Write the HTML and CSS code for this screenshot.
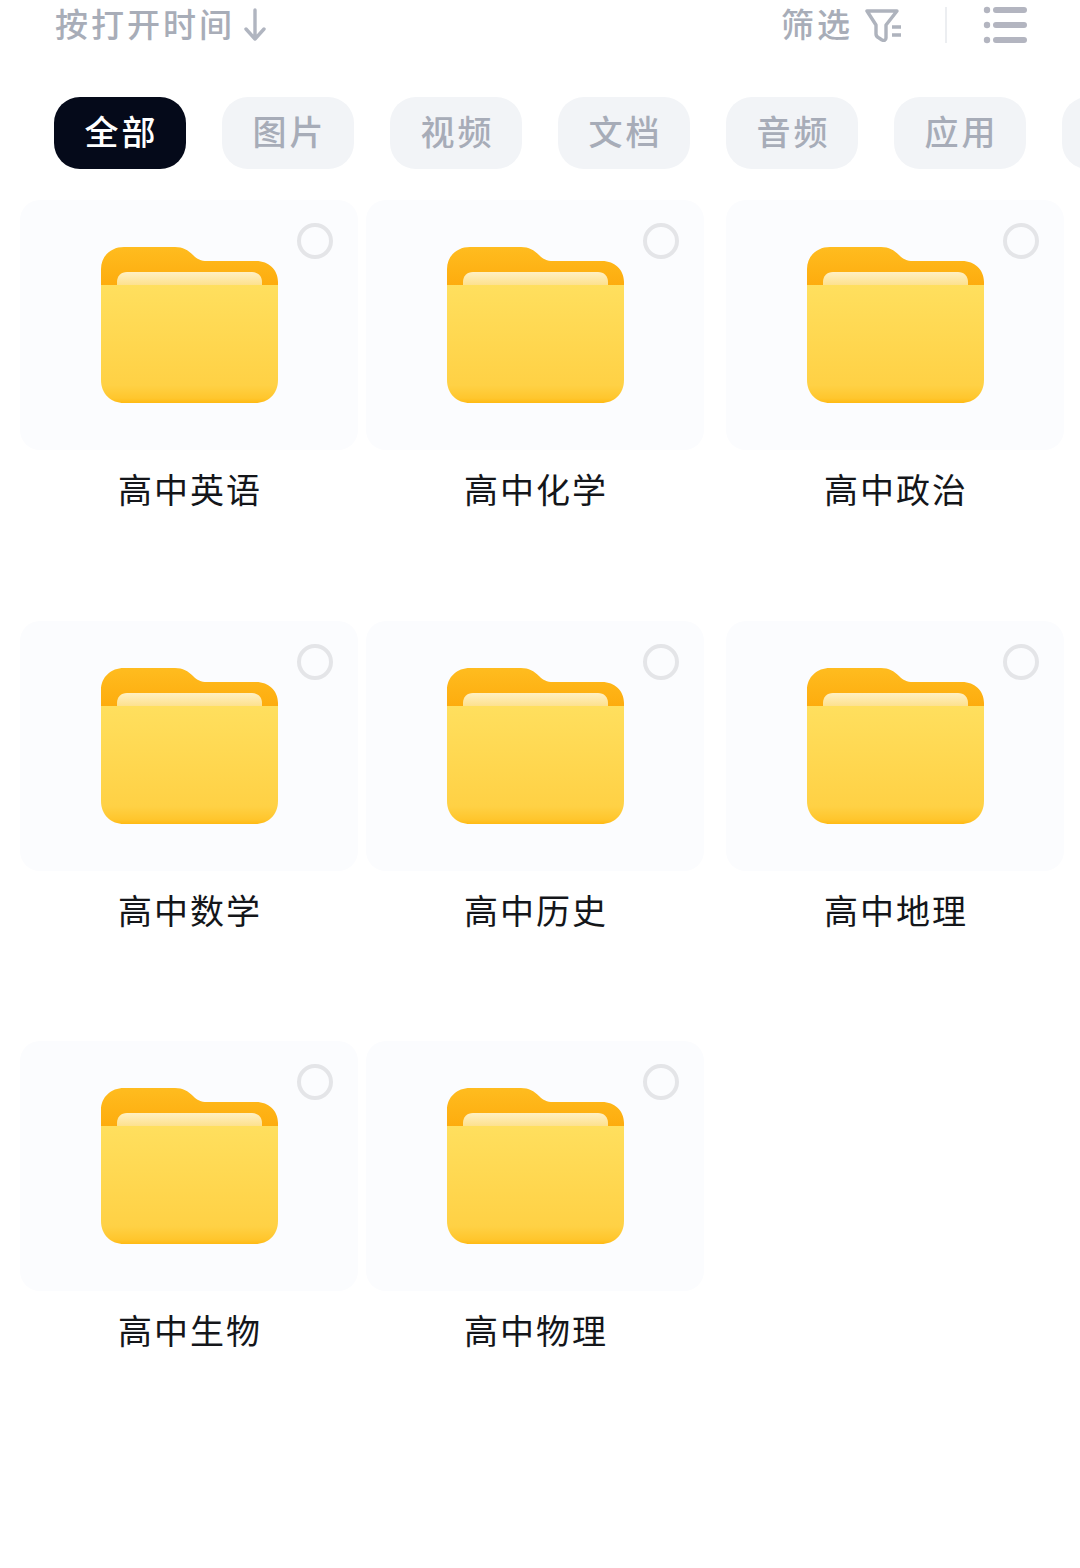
FILE: index.html
```html
<!DOCTYPE html>
<html lang="zh-CN">
<head>
    <meta charset="UTF-8">
    <title>文件</title>
    <link rel="stylesheet" href="styles.css">
</head>
<body>
    <svg class="defs" aria-hidden="true">
        <defs>
            <linearGradient id="back-fill" x1="0" y1="0" x2="0" y2="1">
                <stop offset="0" stop-color="#ffbc1f"/>
                <stop offset="1" stop-color="#fdaa0c"/>
            </linearGradient>
            <linearGradient id="paper-fill" x1="0" y1="0" x2="0" y2="1">
                <stop offset="0" stop-color="#fff0c4"/>
                <stop offset="1" stop-color="#fde08a"/>
            </linearGradient>
            <linearGradient id="front-fill" x1="0" y1="0" x2="0" y2="1">
                <stop offset="0" stop-color="#ffdf5e"/>
                <stop offset="0.85" stop-color="#ffd145"/>
                <stop offset="0.96" stop-color="#ffc62d"/>
                <stop offset="1" stop-color="#ffba14"/>
            </linearGradient>
            <symbol id="folder" viewBox="0 0 177 158">
                <path d="M0 44V23C0 10 10 1 23 1H74C82 1 87 4 92 9C96 13 100 15 106 15H155C168 15 177 24 177 36V44Z" fill="url(#back-fill)"/>
                <path d="M16 40V36C16 30 20 26 26 26H151C157 26 161 30 161 36V40Z" fill="url(#paper-fill)"/>
                <path d="M0 39H177V134C177 148 167 157 154 157H23C10 157 0 148 0 134Z" fill="url(#front-fill)"/>
            </symbol>
        </defs>
    </svg>

    <div class="top-bar">
        <div class="sort">
            <span class="label">按打开时间</span>
            <svg class="arrow" width="22" height="34" viewBox="0 0 22 34">
                <path d="M11 2V31M2 21L11 31L20 21" fill="none" stroke="#b0b5c0" stroke-width="3.4" stroke-linecap="round" stroke-linejoin="round"/>
            </svg>
        </div>
        <div class="tools">
            <span class="label">筛选</span>
            <svg class="filter" width="38" height="34" viewBox="0 0 38 34">
                <path d="M3 3H33L22 17V30C22 32 20 33 18 32L15 30C13 29 12 28 12 26V17Z" fill="none" stroke="#aeb3bd" stroke-width="3.4" stroke-linejoin="round"/>
                <path d="M28 19H37M28 27H37" stroke="#aeb3bd" stroke-width="3.4"/>
            </svg>
            <div class="divider"></div>
            <svg class="list" width="44" height="44" viewBox="0 0 44 44">
                <circle cx="4" cy="7" r="3.2" fill="#b3b5c0"/>
                <circle cx="4" cy="22" r="3.2" fill="#b3b5c0"/>
                <circle cx="4" cy="37" r="3.2" fill="#b3b5c0"/>
                <path d="M13 7H41M13 22H41M13 37H41" stroke="#b3b5c0" stroke-width="6" stroke-linecap="round"/>
            </svg>
        </div>
    </div>

    <div class="tabs">
        <div class="tab active">全部</div>
        <div class="tab">图片</div>
        <div class="tab">视频</div>
        <div class="tab">文档</div>
        <div class="tab">音频</div>
        <div class="tab">应用</div>
        <div class="tab"></div>
    </div>

    <div class="grid">
        <div class="item">
            <div class="card"><span class="radio"></span><svg class="folder"><use href="#folder"/></svg></div>
            <div class="name">高中英语</div>
        </div>
        <div class="item">
            <div class="card"><span class="radio"></span><svg class="folder"><use href="#folder"/></svg></div>
            <div class="name">高中化学</div>
        </div>
        <div class="item">
            <div class="card"><span class="radio"></span><svg class="folder"><use href="#folder"/></svg></div>
            <div class="name">高中政治</div>
        </div>
        <div class="item">
            <div class="card"><span class="radio"></span><svg class="folder"><use href="#folder"/></svg></div>
            <div class="name">高中数学</div>
        </div>
        <div class="item">
            <div class="card"><span class="radio"></span><svg class="folder"><use href="#folder"/></svg></div>
            <div class="name">高中历史</div>
        </div>
        <div class="item">
            <div class="card"><span class="radio"></span><svg class="folder"><use href="#folder"/></svg></div>
            <div class="name">高中地理</div>
        </div>
        <div class="item">
            <div class="card"><span class="radio"></span><svg class="folder"><use href="#folder"/></svg></div>
            <div class="name">高中生物</div>
        </div>
        <div class="item">
            <div class="card"><span class="radio"></span><svg class="folder"><use href="#folder"/></svg></div>
            <div class="name">高中物理</div>
        </div>
    </div>
</body>
</html>
```

FILE: styles.css
```css
body {
    margin: 0;
    height: 1568px;
    overflow: hidden;
    background: #fff;
    font-family: "Noto Sans CJK SC", "Noto Sans", sans-serif;
}
.defs {
    display: block;
    width: 0;
    height: 0;
}
.top-bar {
    display: flex;
    justify-content: space-between;
    align-items: center;
    height: 50px;
    padding: 0 53px 0 55px;
    color: #a8adb8;
    font-size: 33px;
    font-weight: 500;
    letter-spacing: 3px;
}
.sort, .tools {
    display: flex;
    align-items: center;
}
.label {
    padding-bottom: 5px;
}
.arrow {
    margin-left: 9px;
}
.filter {
    margin-left: 11px;
}
.divider {
    width: 2px;
    height: 36px;
    margin: 0 36px 0 43px;
    background: #eceef1;
}
.tabs {
    display: flex;
    gap: 36px;
    margin-top: 47px;
    padding-left: 54px;
    overflow: hidden;
}
.tab {
    flex: none;
    width: 132px;
    height: 72px;
    border-radius: 26px;
    background: #f2f4f7;
    color: #a7acb8;
    font-size: 34px;
    font-weight: 500;
    letter-spacing: 3px;
    line-height: 68px;
    text-align: center;
    text-indent: 3px;
}
.tab.active {
    background: #050a1a;
    color: #fff;
}
.grid {
    display: grid;
    grid-template-columns: 346px 360px 336px;
    grid-auto-rows: 420.5px;
    margin-top: 31px;
    padding-left: 20px;
}
.item {
    width: 338px;
}
.card {
    position: relative;
    display: flex;
    justify-content: center;
    height: 250px;
    border-radius: 20px;
    background: #fbfcfe;
}
.folder {
    width: 177px;
    height: 158px;
    margin-top: 46px;
}
.radio {
    position: absolute;
    top: 23px;
    right: 25px;
    box-sizing: border-box;
    width: 36px;
    height: 36px;
    border: 4px solid #e4e5e8;
    border-radius: 50%;
}
.name {
    margin-top: 15px;
    color: #14161a;
    font-size: 34px;
    letter-spacing: 2px;
    line-height: 48px;
    text-align: center;
    text-indent: 2px;
}
```
